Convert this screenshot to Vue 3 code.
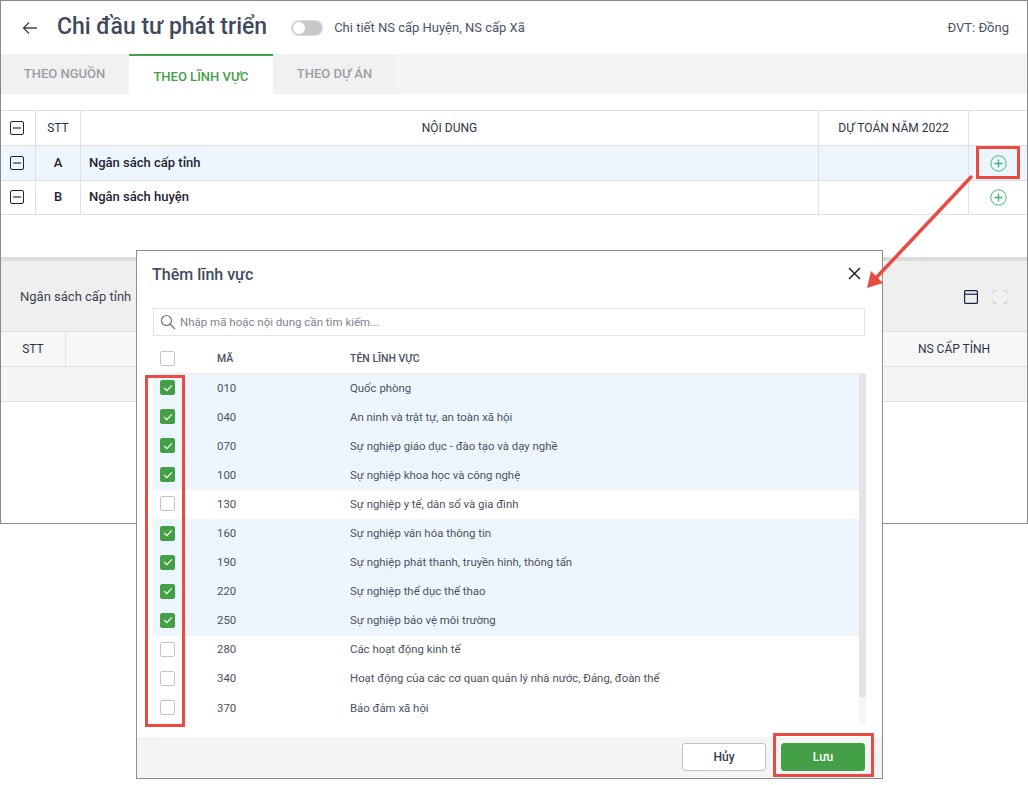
<script setup>
const rows = [
  { code: '010', name: 'Quốc phòng', on: true },
  { code: '040', name: 'An ninh và trật tự, an toàn xã hội', on: true },
  { code: '070', name: 'Sự nghiệp giáo dục - đào tạo và dạy nghề', on: true },
  { code: '100', name: 'Sự nghiệp khoa học và công nghệ', on: true },
  { code: '130', name: 'Sự nghiệp y tế, dân số và gia đình', on: false },
  { code: '160', name: 'Sự nghiệp văn hóa thông tin', on: true },
  { code: '190', name: 'Sự nghiệp phát thanh, truyền hình, thông tấn', on: true },
  { code: '220', name: 'Sự nghiệp thể dục thể thao', on: true },
  { code: '250', name: 'Sự nghiệp bảo vệ môi trường', on: true },
  { code: '280', name: 'Các hoạt động kinh tế', on: false },
  { code: '340', name: 'Hoạt động của các cơ quan quản lý nhà nước, Đảng, đoàn thể', on: false },
  { code: '370', name: 'Bảo đảm xã hội', on: false },
]
const topRows = [
  { stt: 'A', name: 'Ngân sách cấp tỉnh', active: true },
  { stt: 'B', name: 'Ngân sách huyện', active: false },
]
</script>

<template>
  <div class="page">
    <div class="window">
      <header class="head">
        <svg class="back" width="16" height="14" viewBox="0 0 16 14"><path d="M15 7H1.500M7 1.500 1.500 7 7 12.500" fill="none" stroke="#3c4658" stroke-width="1.300"/></svg>
        <h1>Chi đầu tư phát triển</h1>
        <span class="toggle"><i></i></span>
        <span class="toggle-label">Chi tiết NS cấp Huyện, NS cấp Xã</span>
        <span class="unit">ĐVT: Đồng</span>
      </header>
      <nav class="tabs">
        <span class="tab t1">THEO NGUỒN</span>
        <span class="tab active">THEO LĨNH VỰC</span>
        <span class="tab t3">THEO DỰ ÁN</span>
      </nav>
      <section class="grid">
        <div class="tr th">
          <div class="c c-box"><span class="minus"></span></div>
          <div class="c c-stt">STT</div>
          <div class="c c-name center">NỘI DUNG</div>
          <div class="c c-budget">DỰ TOÁN NĂM 2022</div>
          <div class="c c-add"></div>
        </div>
        <div v-for="r in topRows" :key="r.stt" class="tr td" :class="{ hi: r.active }">
          <div class="c c-box"><span class="minus"></span></div>
          <div class="c c-stt"><span class="lift">{{ r.stt }}</span></div>
          <div class="c c-name"><span class="lift">{{ r.name }}</span></div>
          <div class="c c-budget"></div>
          <div class="c c-add">
            <svg width="17" height="17" viewBox="0 0 17 17"><circle cx="8.500" cy="8.500" r="7.700" fill="none" stroke="#3fb56e" stroke-width="1"/><path d="M8.500 4.500v8M4.500 8.500h8" stroke="#3fb56e" stroke-width="1.300"/></svg>
          </div>
        </div>
      </section>
      <section class="detail">
        <div class="detail-head">
          <span>Ngân sách cấp tỉnh</span>
          <svg class="ic1" width="14" height="14" viewBox="0 0 14 14"><rect x=".6" y=".6" width="12.800" height="12.800" rx="1" fill="none" stroke="#0f2446" stroke-width="1.200"/><path d="M1 4.200h12" stroke="#0f2446" stroke-width="1.200"/></svg>
          <svg class="ic2" width="14" height="14" viewBox="0 0 14 14"><path d="M.6 4V.6h3.400M10 .6h3.400V4M13.400 10v3.400H10M4 13.400H.6V10" fill="none" stroke="#d4d4d4" stroke-width="1.200"/></svg>
        </div>
        <div class="detail-th">
          <div class="d-stt">STT</div>
          <div class="d-mid"></div>
          <div class="d-prov">NS CẤP TỈNH</div>
        </div>
        <div class="detail-row"></div>
      </section>
    </div>

    <div class="modal">
      <div class="m-head">
        <span>Thêm lĩnh vực</span>
        <svg class="close" width="13" height="13" viewBox="0 0 13 13"><path d="M1 1l11 11M12 1 1 12" stroke="#1a2233" stroke-width="1.500"/></svg>
      </div>
      <div class="search">
        <svg width="16" height="16" viewBox="0 0 16 16"><circle cx="6.500" cy="6.500" r="5" fill="none" stroke="#6c7585" stroke-width="1.200"/><path d="M10.200 10.200 15 15" stroke="#6c7585" stroke-width="1.300"/></svg>
        <span>Nhập mã hoặc nội dung cần tìm kiếm...</span>
      </div>
      <div class="m-th">
        <span class="cb"></span>
        <span class="code">MÃ</span>
        <span>TÊN LĨNH VỰC</span>
      </div>
      <div class="m-body">
        <div class="m-list">
          <div v-for="r in rows" :key="r.code" class="m-row" :class="{ sel: r.on }">
            <span class="cb" :class="{ on: r.on }">
              <svg v-if="r.on" width="10" height="8" viewBox="0 0 10 8"><path d="M1.200 4l2.600 2.600L8.800 1.400" fill="none" stroke="#fff" stroke-width="1.100"/></svg>
            </span>
            <span class="code">{{ r.code }}</span>
            <span>{{ r.name }}</span>
          </div>
        </div>
        <div class="scroll"><i></i></div>
      </div>
      <div class="m-foot">
        <button class="btn cancel">Hủy</button>
        <button class="btn save">Lưu</button>
      </div>
    </div>

    <div class="mark m1"></div>
    <div class="mark m2"></div>
    <div class="mark m3"></div>
    <svg class="arrow" width="120" height="125" viewBox="0 0 120 125">
      <path d="M105 4 9 106" stroke="#e94b42" stroke-width="3.500" fill="none" stroke-linecap="round"/>
      <path d="M1 115 5 98 17 110Z" fill="#e94b42"/>
    </svg>
  </div>
</template>

<style>
html, body { margin: 0; background: #fff; }
</style>

<style scoped>
.page {
  position: relative;
  width: 1028px;
  height: 785px;
  overflow: hidden;
  font-family: Roboto, "Liberation Sans", sans-serif;
  color: #1f2a3d;
}
.window {
  box-sizing: border-box;
  height: 524px;
  border: 1px solid #8a8a8a;
  background: #fff;
}
.head {
  display: flex;
  align-items: center;
  height: 53px;
  padding-left: 21px;
}
.back { margin-right: 19px; }
h1 {
  margin: -2px 25px 0 0;
  font-size: 23px;
  font-weight: 500;
  color: #3f4a5e;
  white-space: nowrap;
}
.toggle {
  position: relative;
  width: 30px;
  height: 14px;
  border-radius: 7px;
  background: #c8c8c8;
  box-shadow: 0 0 0 1px #d5dde6;
  margin-right: 12px;
}
.toggle i {
  position: absolute;
  left: 1px;
  top: 1px;
  width: 12px;
  height: 12px;
  border-radius: 50%;
  background: #fff;
}
.toggle-label { font-size: 13px; color: #4a5364; }
.unit { margin-left: auto; margin-right: 18px; font-size: 13px; color: #4a5364; }
.tabs {
  display: flex;
  height: 40px;
  background: #f4f4f4;
}
.tab {
  box-sizing: border-box;
  height: 40px;
  padding-top: 12px;
  text-align: center;
  font-size: 13px;
  font-weight: 500;
  color: #9a9ea6;
  background: #f1f1f1;
}
.t1 { width: 128px; padding-right: 1px; }
.t3 { width: 123px; }
.tab.active {
  width: 144px;
  padding-top: 13px;
  background: #fff;
  border-top: 2px solid #43a047;
  color: #43a047;
}
.grid { margin-top: 16px; height: 146px; border-top: 1px solid #e0e0e0; }
.tr { display: flex; border-bottom: 1px solid #e0e0e0; box-sizing: border-box; }
.th { height: 35px; font-size: 12px; color: #2b3547; }
.td { height: 35px; font-size: 13px; font-weight: 500; color: #1f2433; }
.td:last-child { height: 34px; }
.hi { background: #eef6fd; }
.lift { margin-top: -2px; }
.c { display: flex; align-items: center; justify-content: center; box-sizing: border-box; border-right: 1px solid #e0e0e0; }
.c-box { width: 35px; }
.c-stt { width: 45px; }
.c-name { flex: 1; justify-content: flex-start; padding-left: 8px; }
.c-name.center { justify-content: center; padding-left: 0; }
.c-budget { width: 150px; }
.c-add { width: 58px; border-right: 0; }
.minus {
  position: relative;
  box-sizing: border-box;
  width: 14px;
  height: 14px;
  margin-right: 3px;
  margin-top: -1px;
  border: 1px solid #132447;
  border-radius: 2px;
}
.minus::after {
  content: "";
  position: absolute;
  left: 2px;
  right: 2px;
  top: 5px;
  height: 2px;
  background: #7c8494;
}
.detail { border-top: 4px solid #dcdcdc; }
.detail-head {
  display: flex;
  align-items: center;
  height: 71px;
  box-sizing: border-box;
  padding-left: 19px;
  background: #efefef;
  border-bottom: 1px solid #e0e0e0;
  font-size: 13px;
  color: #3a4354;
}
.ic1 { margin-left: auto; margin-right: 15px; margin-top: 2px; }
.ic2 { margin-right: 20px; margin-top: 2px; }
.detail-th {
  display: flex;
  align-items: center;
  height: 35px;
  box-sizing: border-box;
  border-bottom: 1px solid #e0e0e0;
  background: #f7f7f7;
  font-size: 12px;
  color: #2b3547;
}
.d-stt { width: 65px; height: 100%; display: flex; align-items: center; justify-content: center; border-right: 1px solid #e0e0e0; box-sizing: border-box; }
.d-mid { flex: 1; }
.d-prov { width: 146px; text-align: center; }
.detail-row { height: 35px; box-sizing: border-box; background: #f4f4f4; border-bottom: 1px solid #e0e0e0; }

.modal {
  position: absolute;
  left: 136px;
  top: 250px;
  box-sizing: border-box;
  width: 747px;
  height: 529px;
  display: flex;
  flex-direction: column;
  border: 1px solid #8f8f8f;
  background: #fff;
}
.m-head {
  display: flex;
  align-items: center;
  justify-content: space-between;
  box-sizing: border-box;
  height: 47px;
  padding: 0 21px 1px 15px;
  font-size: 16px;
  font-weight: 500;
  color: #414c60;
}
.close { margin-top: -2px; }
.search {
  box-sizing: border-box;
  display: flex;
  align-items: center;
  gap: 4px;
  height: 28px;
  margin: 10px 17px 0 16px;
  padding-left: 6px;
  border: 1px solid #e4e4e4;
  font-size: 11.500px;
  color: #7d8490;
}
.m-th {
  display: flex;
  align-items: center;
  box-sizing: border-box;
  height: 38px;
  padding-top: 8px;
  margin-left: 16px;
  margin-right: 17px;
  padding-left: 7px;
  border-bottom: 1px solid #ececec;
  font-size: 10.500px;
  font-weight: 500;
  color: #4b5260;
}
.code { width: 133px; margin-left: 42px; }
.cb {
  box-sizing: border-box;
  flex: none;
  display: flex;
  align-items: center;
  justify-content: center;
  width: 15px;
  height: 15px;
  border: 1px solid #c4c4c4;
  border-radius: 2px;
  background: #fff;
}
.cb.on { background: #43a047; border-color: #43a047; }
.m-body { display: flex; height: 363px; margin-left: 16px; margin-right: 16px; }
.m-list { flex: 1; }
.m-row {
  display: flex;
  align-items: center;
  box-sizing: border-box;
  height: 29.100px;
  padding-left: 7px;
  padding-bottom: 2px;
  font-size: 11.400px;
  color: #4b5260;
  white-space: nowrap;
}
.m-row.sel { background: #eef6fd; }
.scroll { width: 7px; background: #f6f6f6; height: 350px; }
.scroll i { display: block; height: 323px; background: #e4e4e4; }
.m-foot {
  flex: 1;
  display: flex;
  align-items: center;
  justify-content: flex-end;
  gap: 15px;
  padding-right: 17px;
  padding-bottom: 1px;
  background: #f4f4f4;
}
.btn {
  box-sizing: border-box;
  width: 84px;
  height: 28px;
  border-radius: 3px;
  font-family: inherit;
  font-size: 12px;
  font-weight: 500;
  padding: 0;
}
.cancel { background: #fff; border: 1px solid #c4c4c4; color: #333b4a; }
.save { background: #43a047; border: 1px solid #43a047; color: #fff; }
.mark { position: absolute; box-sizing: border-box; border: 3px solid #e94b42; }
.m1 { left: 976px; top: 146px; width: 44px; height: 33px; }
.m2 { left: 145px; top: 375px; width: 40px; height: 352px; }
.m3 { left: 773px; top: 733px; width: 101px; height: 44px; }
.arrow { position: absolute; left: 866px; top: 173px; }
</style>
